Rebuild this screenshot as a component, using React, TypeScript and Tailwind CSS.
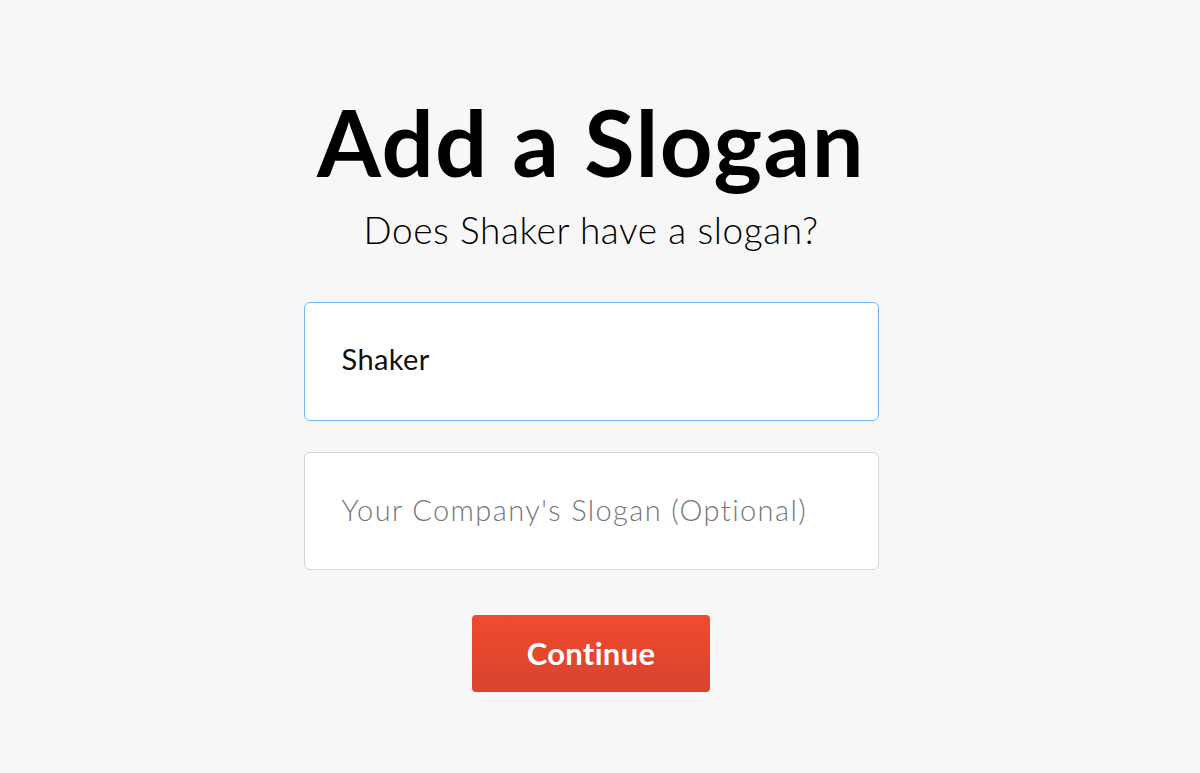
import React from "react";

export default function App() {
  return (
    <div className="w-full h-[773px] bg-[#f7f7f7] flex flex-col items-center pr-[18px]" style={{ fontFamily: "Lato, 'Open Sans', sans-serif" }}>
      <h1 className="mt-[88px] text-[92px] leading-[108px] font-bold text-black tracking-[1.4px]">Add a Slogan</h1>
      <p className="mt-[12px] text-[37px] leading-[44px] font-light text-black tracking-[0.6px]">Does Shaker have a slogan?</p>
      <div className="mt-[50px] w-[575px] h-[119px] bg-white border border-[#74b7f2] rounded-[6px] flex items-center px-[37px] pb-[6px]">
        <span className="text-[29px] text-[#111] tracking-[0.4px]">Shaker</span>
      </div>
      <div className="mt-[31px] w-[575px] h-[118px] bg-white border border-[#d6d6d6] rounded-[6px] flex items-center px-[37px] pb-[2px]">
        <span className="text-[29px] text-[#777] font-light tracking-[1.4px]">Your Company's Slogan (Optional)</span>
      </div>
      <button className="mt-[45px] w-[238px] h-[77px] rounded-[4px] bg-gradient-to-b from-[#f04c2e] to-[#d8432e] text-white text-[31px] font-bold tracking-[0.3px]">
        Continue
      </button>
    </div>
  );
}
